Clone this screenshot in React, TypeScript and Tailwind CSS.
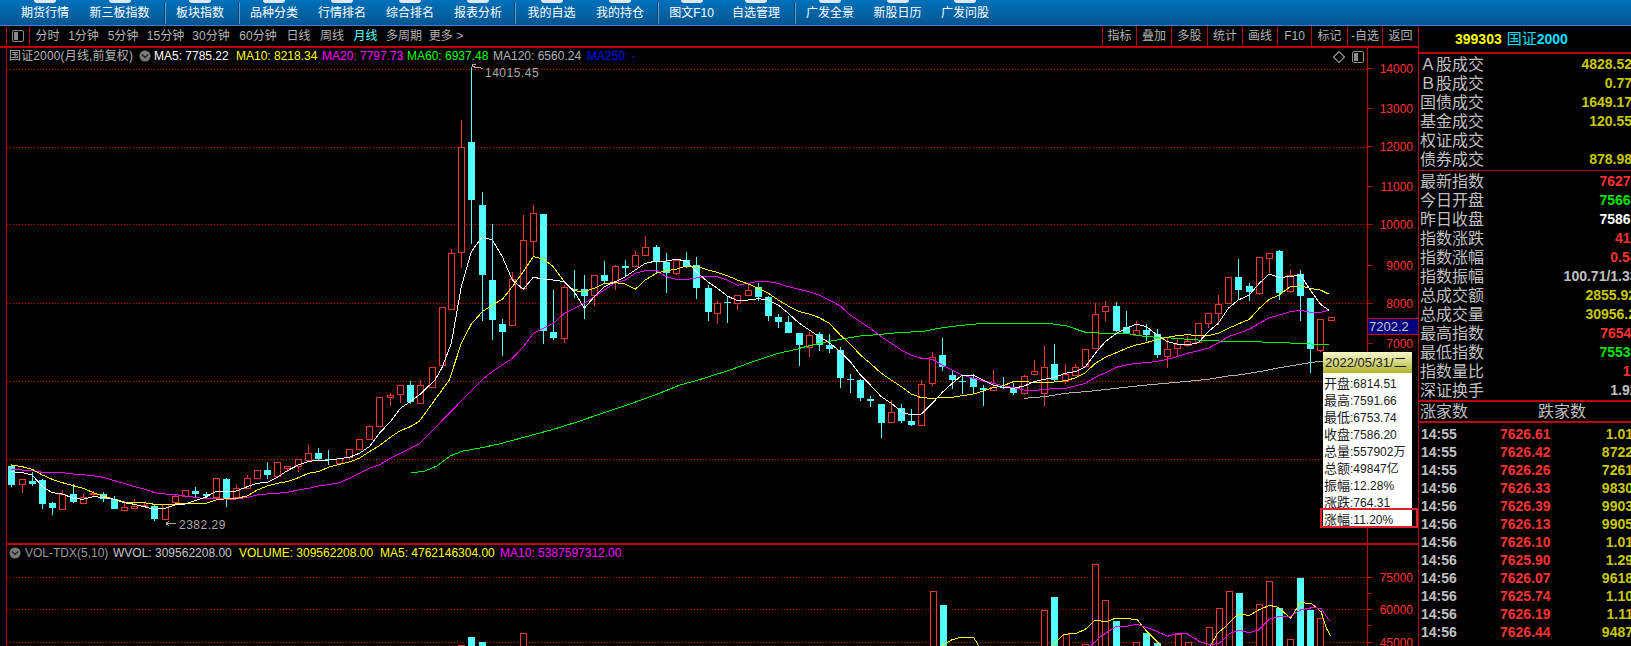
import React from "react";

type C = [number, number, number, number, number];
type Pt = [number, number];
const FONT = "font-['Liberation_Sans','Noto_Sans_CJK_SC',sans-serif]";

const z7 = (x: number, y: number): Pt => [x / 3, 380 + y / 3];
const z6 = (x: number, y: number): Pt => [380 + x / 3, 60 + y / 3];
const z8 = (x: number, y: number): Pt => [780 + x / 3, 220 + y / 3];
const z4 = (x: number, y: number): Pt => [1230 + x / 3, 200 + y / 3];
const z9 = (x: number, y: number): Pt => [780 + x / 2.8, 530 + y / 3];
const pg = (x: number, y: number): Pt => [x, y];

// [x, bodyTop, bodyBottom, high, low] in crop coordinates
const up7: C[] = [[67,298,314,298,338],[187,342,386,331,386],[250,350,367,342,368],[280,340,344,334,352],[373,382,391,364,391],[403,378,383,358,388],[433,375,378,368,382],[496,372,418,372,418],[526,349,368,344,370],[556,331,349,331,349],[649,295,353,295,353],[709,325,352,316,356],[742,295,325,286,325],[772,271,296,271,296],[832,247,290,247,290],[862,259,265,259,276],[895,238,260,238,275],[925,220,241,195,241],[1018,233,247,233,247],[1048,208,231,208,238],[1078,178,208,178,208],[1108,139,179,136,179],[1138,52,139,52,139],[1171,45,51,40,78],[1201,16,43,16,68],[1261,15,68,0,68]];
const dn7: C[] = [[34,258,315,252,320],[97,303,312,275,318],[127,300,372,298,386],[157,369,384,366,404],[220,342,366,313,368],[310,342,356,336,365],[343,358,389,349,389],[463,378,416,372,422],[586,333,341,321,352],[619,343,350,336,357],[679,298,358,294,380],[802,270,285,246,297],[955,219,236,205,240],[985,238,240,210,255],[1231,15,65,3,73]];
const up6: C[] = [[155,920,980,920,980],[185,742,916,740,916],[214,578,746,568,746],[244,260,575,180,623],[397,658,795,636,798],[430,541,684,465,690],[460,460,545,435,590],[553,682,836,676,850],[643,646,707,646,738],[706,619,668,616,690],[766,586,620,573,620],[796,562,586,528,586],[889,600,638,598,645],[1012,730,761,724,792],[1072,706,731,706,750],[1105,691,707,676,707]];
const dn6: C[] = [[274,246,420,20,552],[307,435,645,397,782],[337,660,780,492,840],[367,792,816,778,888],[490,462,812,462,852],[520,816,834,690,840],[583,688,690,630,714],[613,688,708,645,777],[673,645,664,603,670],[736,618,623,600,650],[829,561,605,555,640],[859,605,638,580,698],[919,600,618,576,624],[949,615,684,591,717],[983,684,756,675,782],[1042,726,730,712,789],[1135,682,711,670,722],[1165,711,768,708,783],[1195,771,786,762,804]];
const up8: C[] = [[88,346,382,335,410],[334,577,608,540,608],[424,493,617,480,617],[457,412,491,396,497],[640,502,512,450,512],[733,469,521,466,524],[763,454,464,420,464],[793,442,521,378,558],[856,461,483,432,492],[886,442,467,432,467],[916,388,440,388,440],[946,283,386,249,388],[976,259,275,243,303],[1069,331,346,303,346],[1162,388,410,355,444],[1192,372,383,358,412],[1222,364,376,348,380],[1255,310,366,310,366],[1285,280,311,280,323],[1315,253,281,225,315],[1345,172,251,172,251],[1438,112,221,112,224],[1468,100,116,100,160]];
const dn8: C[] = [[25,306,339,288,339],[58,339,376,339,438],[118,343,375,336,392],[148,375,387,342,398],[181,390,474,382,504],[211,478,480,462,518],[241,480,534,478,542],[271,538,543,528,560],[304,552,608,552,654],[364,565,603,552,608],[394,603,615,567,618],[487,405,440,354,453],[517,465,480,453,507],[547,482,485,468,522],[580,474,501,462,518],[610,504,510,495,558],[670,500,503,471,508],[700,507,518,489,524],[823,433,480,372,486],[1009,258,334,246,336],[1039,321,340,273,340],[1099,331,346,312,363],[1132,342,405,327,414],[1375,171,210,117,240],[1408,198,216,189,243],[1498,93,219,90,240]];
const up4: C[] = [[181,226,275,211,278],[271,358,450,358,456],[302,352,361,352,361]];
const dn4: C[] = [[211,222,288,210,362],[241,294,446,294,519]];

function Candles({ list, conv, up }: { list: C[]; conv: (x: number, y: number) => Pt; up: boolean }) {
  return (
    <>
      {list.map(([x, t, b, h, l], i) => {
        const [px, top] = conv(x, t);
        const bot = conv(x, b)[1];
        const hi = conv(x, h)[1];
        const lo = conv(x, l)[1];
        const cx = Math.round(px) + 0.5;
        const color = up ? "#ff3232" : "#54ffff";
        return (
          <g key={i}>
            <line x1={cx} x2={cx} y1={Math.round(hi)} y2={Math.round(top)} stroke={color} />
            <line x1={cx} x2={cx} y1={Math.round(bot)} y2={Math.round(lo)} stroke={color} />
            {up ? (
              <rect x={cx - 3} y={Math.round(top) + 0.5} width={6} height={Math.max(1, Math.round(bot - top))} fill="#000" stroke={color} />
            ) : (
              <rect x={cx - 3.5} y={Math.round(top)} width={7} height={Math.max(1, Math.round(bot - top))} fill={color} />
            )}
          </g>
        );
      })}
    </>
  );
}

const join = (...parts: Pt[][]) => parts.flat().map((p) => p[0].toFixed(1) + "," + p[1].toFixed(1)).join(" ");
const map = (conv: (x: number, y: number) => Pt, a: number[]) => {
  const o: Pt[] = [];
  for (let i = 0; i < a.length; i += 2) o.push(conv(a[i], a[i + 1]));
  return o;
};

const white = join(
  map(z7,[34,275,67,278,97,285,127,320,157,338,187,342,220,355,250,358,280,350,310,352,343,358,373,368,403,373,433,380,463,388,496,385,526,375,556,372,586,362,619,350,649,334,679,334,709,333,742,320,772,310,802,307,832,292,862,272,895,255,925,245,955,240,985,240,1018,236,1048,232,1078,220,1108,200,1138,160,1171,125,1201,85,1231,65,1258,45]),
  map(z6,[165,960,185,925,214,850,244,680,274,575,307,530,337,540,367,590,397,660,430,688,460,652,490,657,520,660,553,665,583,695,613,745,643,710,673,680,706,665,736,650,766,630,796,610,829,603,859,603,889,598,919,603,949,635,983,665,1012,685,1042,708,1072,722,1105,720,1135,716,1165,720,1195,735,1225,760]),
  map(z8,[58,310,88,330,118,350,148,368,181,395,211,425,241,465,271,495,304,530,334,550,364,575,394,585,424,582,457,550,487,517,517,490,547,465,580,465,610,480,640,495,670,502,700,505,733,498,763,485,793,478,823,472,856,460,886,455,916,440,946,400,976,365,1009,340,1039,325,1069,312,1099,320,1132,345,1162,365,1192,372,1222,375,1255,368,1285,335,1315,310,1345,265,1375,240,1408,225,1438,190,1468,162,1498,172]),
  map(z4,[181,230,211,225,241,270,271,312,298,332])
);
const yellow = join(
  map(z7,[34,255,67,260,97,268,127,285,157,298,187,308,220,317,250,325,280,338,310,348,343,358,373,366,403,367,433,368,463,373,496,374,526,372,556,370,586,371,619,370,649,360,679,356,709,355,742,348,772,330,802,318,832,310,862,305,895,293,925,280,955,275,985,262,1018,253,1048,246,1078,235,1108,215,1138,197,1171,172,1201,152,1231,140,1258,124]),
  map(z6,[208,960,244,850,274,792,307,755,337,735,367,718,397,680,430,635,460,590,490,597,520,620,553,665,583,692,613,695,643,685,673,670,706,668,736,672,766,688,796,660,829,640,859,632,889,628,919,618,949,618,983,630,1012,637,1042,647,1072,660,1105,672,1135,685,1165,700,1195,720]),
  map(z8,[25,258,58,275,88,282,118,293,148,310,181,345,211,372,241,405,271,430,304,460,334,480,364,500,394,522,424,533,457,535,487,533,517,532,547,527,580,522,610,513,640,503,670,497,700,485,733,484,763,488,793,488,823,486,856,482,886,474,916,458,946,430,976,412,1009,398,1039,385,1069,375,1099,368,1132,358,1162,352,1192,347,1222,344,1255,347,1285,347,1315,340,1345,325,1375,312,1408,298,1438,265,1468,238,1498,225]),
  map(z4,[181,260,211,257,241,265,271,270,298,283])
);
const magenta = join(
  map(z7,[34,268,67,270,97,272,127,277,157,277,187,278,220,282,250,284,280,287,310,292,343,302,373,310,403,320,433,327,463,338,496,342,526,344,556,348,586,352,619,357,649,356,679,357,709,357,742,352,772,345,802,342,832,340,862,337,895,330,925,325,955,318,985,314,1018,308,1048,295,1078,280,1108,265,1138,255,1171,235,1201,220,1231,205,1258,192]),
  map(z6,[305,960,337,935,367,915,397,895,430,860,460,820,490,805,520,790,553,760,583,745,613,730,643,710,673,690,706,668,736,660,766,640,796,632,829,631,859,650,889,658,919,659,949,654,983,649,1012,650,1042,660,1072,676,1105,670,1135,664,1165,665,1195,670]),
  map(z8,[25,200,58,208,88,215,118,225,148,240,181,258,211,285,241,305,271,325,304,350,334,370,364,390,394,405,424,415,457,418,487,435,517,450,547,465,580,475,610,483,640,490,670,497,700,503,733,510,763,512,793,508,823,506,856,505,886,498,916,490,946,472,976,458,1009,442,1039,435,1069,430,1099,428,1132,424,1162,418,1192,410,1222,400,1255,392,1285,385,1315,368,1345,350,1375,340,1408,328,1438,310,1468,293,1498,285]),
  map(z4,[181,335,211,331,241,337,271,337,298,331])
);
const green = join(
  map(pg,[411,473,425,471,437,466,450,456,463,451,480,448,499,444,525,437,551,430,577,422,603,413,630,404,655,395,680,385]),
  map(z6,[955,960,1050,930,1110,908,1195,880,1258,866]),
  map(z8,[58,385,118,370,181,358,241,348,304,343,364,337,424,335,487,323,547,316,610,310,700,310,805,310,860,318,916,337,976,340,1039,340,1099,350,1162,353,1222,358,1285,362,1392,365,1498,367]),
  map(z4,[160,428,241,432,298,433])
);
const gray = join(
  map(z8,[733,535,793,530,856,520,916,515,1009,505,1100,495,1192,487,1285,478,1350,467,1375,465,1438,455,1498,443]),
  map(z4,[240,488,280,483])
);

const priceTicks: [string, number][] = [["14000",68],["13000",108],["12000",146],["11000",186],["10000",224],["9000",265],["8000",303],["7000",343]];
const priceDots = [69, 147, 224, 303, 381, 459];
const volDots = [577, 609, 642];

const volUp: [number, number][] = [[1044,610],[1065.7,634],[1085,644],[1095,564],[1105,600],[1136,642],[1177.5,634],[1187.5,642],[1208.6,627],[1218.6,608],[1228.6,591],[1259,604],[1269,581],[1290,639],[1320,618],[932.5,591],[523,633],[461,645]];
const volDn: [number, number][] = [[942.5,605],[1054,597],[1116,621],[1146,633],[1157,643],[1238.6,593],[1279,608],[1300,578],[1310,610],[471,637],[482,642]];

const nav: [string, string][] = [
  ["期货行情","w-[68px]"],["新三板指数","w-[81px]"],["|","ml-[4px]"],["板块指数","w-[68px]"],["|","ml-[4px]"],["品种分类","w-[68px]"],["行情排名","w-[68px]"],["综合排名","w-[68px]"],["报表分析","w-[68px]"],["|","ml-[2px]"],["我的自选","w-[71px]"],["我的持仓","w-[66px]"],["|","ml-[4px]"],["图文F10","w-[65px]"],["自选管理","w-[64px]"],["|","ml-[6px]"],["广发全景","w-[68px]"],["新股日历","w-[67px]"],["广发问股","w-[68px]"],
];
const periods: [string, string][] = [["分时","w-[33px]"],["1分钟","w-[39px]"],["5分钟","w-[40px]"],["15分钟","w-[45px]"],["30分钟","w-[46px]"],["60分钟","w-[48px]"],["日线","w-[33px]"],["周线","w-[34px]"],["月线","w-[33px]"],["多周期","w-[44px]"],["更多 >","w-[40px]"]];
const tools: [string, string][] = [["指标","w-[34px]"],["叠加","w-[35px]"],["多股","w-[36px]"],["统计","w-[35px]"],["画线","w-[35px]"],["F10","w-[34px]"],["标记","w-[36px]"],["-自选","w-[35px]"],["返回","w-[36px]"]];

const Y = "text-[#c8c800]", R = "text-[#ff3232]", G = "text-[#00e600]", W = "text-white", S = "text-[#c0c0c0]";
const quote1: [string, string, string][] = [["Ａ股成交","4828.52",Y],["Ｂ股成交","0.77",Y],["国债成交","1649.17",Y],["基金成交","120.55",Y],["权证成交","",Y],["债券成交","878.98",Y]];
const quote2: [string, string, string][] = [["最新指数","7627.01",R],["今日开盘","7566.31",G],["昨日收盘","7586.20",W],["指数涨跌","41.01",R],["指数涨幅","0.54%",R],["指数振幅","100.71/1.33%",S],["总成交额","2855.92亿",Y],["总成交量","30956.2万",Y],["最高指数","7654.11",R],["最低指数","7553.40",G],["指数量比","1.12",R],["深证换手","1.92%",S]];
const ticks: [string, string, string][] = [["14:55","7626.61","1.01亿"],["14:55","7626.42","8722万"],["14:55","7626.26","7261万"],["14:56","7626.33","9830万"],["14:56","7626.39","9903万"],["14:56","7626.13","9905万"],["14:56","7626.10","1.01亿"],["14:56","7625.90","1.29亿"],["14:56","7626.07","9618万"],["14:56","7625.74","1.10亿"],["14:56","7626.19","1.11亿"],["14:56","7626.44","9487万"]];
const tip = [["开盘","6814.51"],["最高","7591.66"],["最低","6753.74"],["收盘","7586.20"],["总量","557902万"],["总额","49847亿"],["振幅","12.28%"],["涨跌","764.31"]];

function Dots({ ys }: { ys: number[] }) {
  return (
    <>
      {ys.map((y) => (
        <line key={y} x1={7} x2={1367} y1={y + 0.5} y2={y + 0.5} stroke="#b00000" strokeDasharray="1 2" />
      ))}
    </>
  );
}

function ChevronDot() {
  return (
    <svg width="12" height="12" viewBox="0 0 12 12" className="shrink-0">
      <circle cx="6" cy="6" r="5.5" fill="#7a7a7a" />
      <path d="M3 4.5 L6 7.5 L9 4.5" fill="none" stroke="#222" strokeWidth="1.4" />
    </svg>
  );
}

function PanelIcon() {
  return (
    <svg width="12" height="12" viewBox="0 0 12 12" className="shrink-0">
      <rect x="0.5" y="0.5" width="11" height="11" rx="1.5" fill="none" stroke="#8a8a8a" />
      <rect x="2" y="2" width="4" height="8" fill="#8a8a8a" />
    </svg>
  );
}

export default function App() {
  return (
    <div className={`w-[1631px] h-[646px] overflow-hidden bg-black flex flex-col ${FONT}`}>
      {/* top navigation */}
      <div className="h-[26px] shrink-0 flex items-center pl-[11px] bg-gradient-to-b from-[#0071bb] to-[#05568f] border-b border-[#3c7fd6]">
        {nav.map(([t, c], i) =>
          t === "|" ? (
            <div key={i} className={`w-[2px] h-[22px] bg-[#0a3f6e] border-r border-[#5f9ccc] ${c}`} />
          ) : (
            <div key={i} className={`relative h-[25px] flex items-center justify-center text-white text-[12px] ${c}`}>
              <span className="absolute top-0 left-1/2 -translate-x-1/2 w-[22px] h-[3px] rounded-b-full bg-[#dfe8f0]" />
              {t}
            </div>
          )
        )}
      </div>

      <div className="flex flex-1 min-h-0">
        {/* chart column */}
        <div className="relative w-[1418px] shrink-0 flex flex-col">
          <div className="h-[22px] shrink-0 flex items-stretch text-[12px] text-[#b4b4b4] border-b-2 border-[#c00000]">
            <div className="ml-[6px] w-[24px] border-x border-[#c00000] flex items-center justify-center">
              <PanelIcon />
            </div>
            <div className="flex items-center pl-[1px]">
              {periods.map(([t, c]) => (
                <span key={t} className={`${c} text-center whitespace-nowrap ${t === "月线" ? "text-[#54ffff]" : ""}`}>{t}</span>
              ))}
            </div>
            <div className="ml-auto flex items-stretch">
              {tools.map(([t, c]) => (
                <span key={t} className={`${c} border-l border-[#c00000] flex items-center justify-center whitespace-nowrap`}>{t}</span>
              ))}
            </div>
          </div>

          {/* price pane */}
          <div className="relative h-[497px] shrink-0 ml-[6px] border-l border-[#c00000] border-b-2 border-b-[#c00000]">
            <svg className="absolute inset-0" width="1411" height="495" viewBox="7 48 1411 495" shapeRendering="crispEdges">
              <Dots ys={priceDots} />
              <line x1={1367.5} x2={1367.5} y1={48} y2={544} stroke="#c00000" />
              {priceTicks.map(([t, y]) => (
                <g key={t}>
                  <line x1={1368} x2={1373} y1={y + 0.5} y2={y + 0.5} stroke="#c00000" />
                  <text x={1413} y={y + 5} textAnchor="end" fill="#ff3232" fontSize="12" shapeRendering="auto">{t}</text>
                </g>
              ))}
              <Candles list={up7} conv={z7} up />
              <Candles list={dn7} conv={z7} up={false} />
              <Candles list={up6} conv={z6} up />
              <Candles list={dn6} conv={z6} up={false} />
              <Candles list={up8} conv={z8} up />
              <Candles list={dn8} conv={z8} up={false} />
              <Candles list={up4} conv={z4} up />
              <Candles list={dn4} conv={z4} up={false} />
              <polyline points={gray} fill="none" stroke="#b0b0b0" />
              <polyline points={green} fill="none" stroke="#00ff00" />
              <polyline points={magenta} fill="none" stroke="#ff00ff" />
              <polyline points={yellow} fill="none" stroke="#ffff00" />
              <polyline points={white} fill="none" stroke="#ffffff" />
              <path d="M472 67 L472 64 L476 64 M473 66 L476 68 L479 67 L483 69" fill="none" stroke="#aaaaaa" />
              <text x={485} y={77} fill="#aaaaaa" fontSize="12" letterSpacing="0.5">14015.45</text>
              <path d="M166 523.5 L176 523.5 M166 523.5 L169 521 M166 523.5 L169 526" fill="none" stroke="#aaaaaa" />
              <text x={179} y={529} fill="#aaaaaa" fontSize="12" letterSpacing="0.5">2382.29</text>
              <path d="M1339 51.5 L1344.5 57 L1339 62.5 L1333.5 57 Z" fill="none" stroke="#7a7a7a" />
            </svg>
            <div className="absolute top-0 left-[2px] right-0 flex items-center h-[16px] text-[12px] whitespace-nowrap">
              <span className="w-[130px] text-[#b4b4b4] tracking-[0.15px]">国证2000(月线,前复权)</span>
              <ChevronDot />
              <span className="w-[85px] pl-[3px] text-white">MA5: 7785.22</span>
              <span className="w-[86px] text-[#ffff00]">MA10: 8218.34</span>
              <span className="w-[85px] text-[#ff00ff]">MA20: 7797.73</span>
              <span className="w-[86px] text-[#00ff00]">MA60: 6937.48</span>
              <span className="w-[94px] text-[#b4b4b4]">MA120: 6560.24</span>
              <span className="text-[#0000ff]">MA250: -</span>
            </div>
            <div className="absolute top-[3px] left-[1345px]">
              <PanelIcon />
            </div>
            <div className="absolute top-[270px] left-[1361px] w-[50px] h-[17px] bg-[#00007f] border-y border-[#e00000] text-[13px] leading-[15px] text-[#c8c8c8] pl-[1px]">7202.2</div>
          </div>

          {/* volume pane */}
          <div className="relative flex-1 min-h-0 ml-[6px] border-l border-[#c00000]">
            <svg className="absolute inset-0" width="1411" height="101" viewBox="7 545 1411 101" shapeRendering="crispEdges">
              <Dots ys={volDots} />
              <line x1={1367.5} x2={1367.5} y1={545} y2={646} stroke="#c00000" />
              {([["75000",577],["60000",609],["45000",642]] as [string, number][]).map(([t, y]) => (
                <g key={t}>
                  <line x1={1368} x2={1373} y1={y + 0.5} y2={y + 0.5} stroke="#c00000" />
                  <text x={1413} y={y + 5} textAnchor="end" fill="#ff3232" fontSize="12">{t}</text>
                </g>
              ))}
              <line x1={1368} x2={1371} y1={593.5} y2={593.5} stroke="#c00000" />
              <line x1={1368} x2={1371} y1={625.5} y2={625.5} stroke="#c00000" />
              {volUp.map(([x, y]) => (
                <rect key={x} x={Math.round(x) - 3 + 0.5} y={y + 0.5} width={6} height={660 - y} fill="#000" stroke="#ff3232" />
              ))}
              {volDn.map(([x, y]) => (
                <rect key={x} x={Math.round(x) - 3} y={y} width={7} height={660 - y} fill="#54ffff" />
              ))}
              <polyline points={join(map(z9,[455,347,480,330,505,322,542,322,556,347]))} fill="none" stroke="#ffff00" />
              <polyline points={join(map(z9,[762,347,795,313,830,310,855,298,880,272,915,274,940,265,1000,268,1015,290,1060,340,1066,347]))} fill="none" stroke="#ffff00" />
              <polyline points={join(map(z9,[1205,347,1225,310,1245,292,1270,265,1285,253,1315,256,1340,240,1370,226,1395,232,1430,265,1457,217,1490,222,1515,245,1530,295,1542,318]))} fill="none" stroke="#ffff00" />
              <polyline points={join(map(z9,[870,347,900,318,940,290,975,288,1000,283,1040,297,1085,319,1110,311,1140,311,1175,335,1205,344,1230,340,1260,310,1285,301,1315,308,1340,300,1370,268,1395,260,1430,258,1457,240,1490,233,1515,235,1538,272]))} fill="none" stroke="#ff00ff" />
            </svg>
            <div className="absolute top-[1px] left-[2px] right-0 flex items-center h-[14px] text-[12px] whitespace-nowrap">
              <ChevronDot />
              <span className="w-[92px] pl-[4px] text-[#9a9a9a]">VOL-TDX(5,10)</span>
              <span className="w-[126px] text-[#c8c8c8]">WVOL: 309562208.00</span>
              <span className="w-[141px] text-[#ffff00]">VOLUME: 309562208.00</span>
              <span className="w-[120px] text-[#ffff00]">MA5: 4762146304.00</span>
              <span className="text-[#ff00ff]">MA10: 5387597312.00</span>
            </div>
          </div>

          {/* K-line tooltip */}
          <div className="absolute top-[326px] left-[1323px] w-[89px] bg-white text-[#1a1a1a] text-[12px]">
            <div className="h-[21px] flex items-center pl-[2px] text-[13px] whitespace-nowrap bg-gradient-to-b from-[#f8f8c8] to-[#b4b420]">2022/05/31/二</div>
            <div className="pt-[2px] pl-[1px]">
              {tip.map(([k, v]) => (
                <div key={k} className="h-[17px] leading-[17px] whitespace-nowrap"><span className="text-[13px]">{k}</span>:{v}</div>
              ))}
              <div className="h-[17px] leading-[17px] whitespace-nowrap"><span className="text-[13px]">涨幅</span>:11.20%</div>
            </div>
            <div className="absolute left-[-3px] bottom-0 w-[98px] h-[20px] border-2 border-[#e0202c]" />
          </div>
        </div>

        {/* quote panel */}
        <div className="w-[213px] shrink-0 border-l border-[#c00000] overflow-hidden">
          <div className="h-[28px] border-b-2 border-[#c00000] flex items-center pl-[36px] whitespace-nowrap">
            <span className="text-[14px] font-bold text-[#ffff00] mr-[5px]">399303</span>
            <span className="text-[15px] text-[#00e0ff]">国证</span>
            <span className="text-[14px] font-bold text-[#00e0ff]">2000</span>
          </div>
          <div className="pt-[1px] pb-[1px] border-b border-[#c00000]">
            {quote1.map(([k, v, c]) => (
              <div key={k} className="w-[213px] h-[19px] flex justify-between items-center pl-[1px] whitespace-nowrap">
                <span className="text-[16px] text-[#c0c0c0] leading-none">{k}</span>
                <span className={`text-[14px] font-bold ${c}`}>{v}</span>
              </div>
            ))}
          </div>
          <div className="pt-[1px] border-b-2 border-[#c00000]">
            {quote2.map(([k, v, c]) => (
              <div key={k} className="w-[231px] h-[19px] flex justify-between items-center pl-[1px] whitespace-nowrap">
                <span className="text-[16px] text-[#c0c0c0] leading-none">{k}</span>
                <span className={`text-[14px] font-bold ${c}`}>{v}</span>
              </div>
            ))}
          </div>
          <div className="h-[21px] border-b-2 border-[#c00000] flex items-center text-[16px] text-[#c0c0c0] pl-[1px] whitespace-nowrap">
            <span className="w-[118px]">涨家数</span>
            <span>跌家数</span>
          </div>
          <div className="pt-[2px]">
            {ticks.map(([t, p, v], i) => (
              <div key={i} className="relative w-[228px] h-[18px] flex items-center pl-[2px] text-[14px] font-bold whitespace-nowrap">
                <span className="w-[79px] text-[#c0c0c0]">{t}</span>
                <span className="text-[#ff3232]">{p}</span>
                <span className={`ml-auto ${Y}`}>{v}</span>
              </div>
            ))}
          </div>
        </div>
      </div>
    </div>
  );
}
